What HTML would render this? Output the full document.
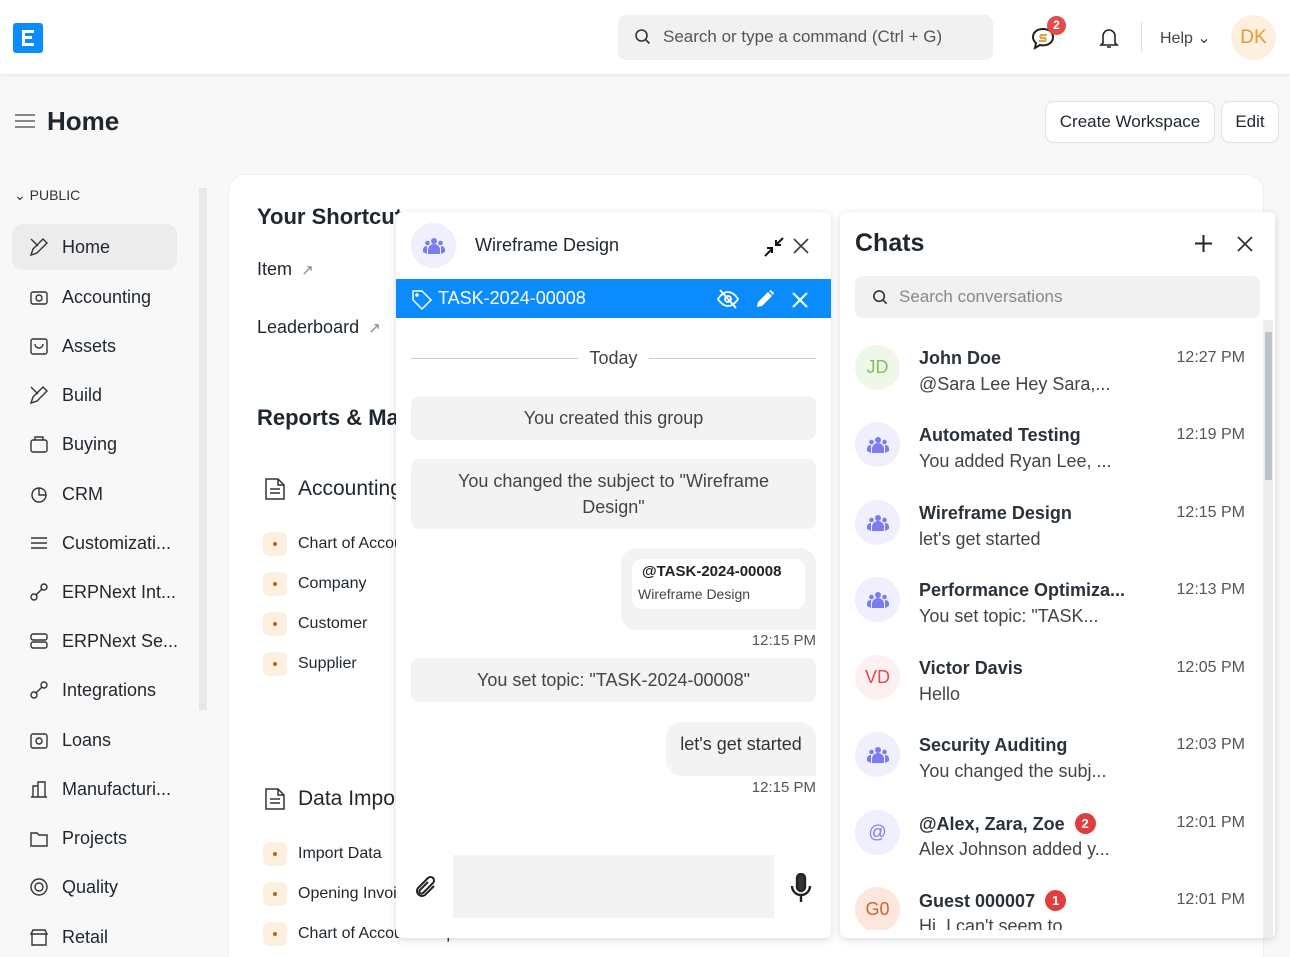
<!DOCTYPE html>
<html><head><meta charset="utf-8"><style>
*{box-sizing:border-box;margin:0;padding:0}
html,body{width:1290px;height:957px;overflow:hidden}
body{background:#f8f8f8;font-family:"Liberation Sans",sans-serif;color:#1f272e;position:relative}
.a{position:absolute}
.nav{left:0;top:0;width:1290px;height:75px;background:#fff;border-bottom:1px solid #ececec;box-shadow:0 1px 3px rgba(0,0,0,.04)}
.si{left:12px;width:175px;height:46px;display:flex;align-items:center;padding-left:16px;font-size:18px;color:#1f272e;white-space:nowrap}
.si svg{width:22px;height:22px;margin-right:12px;fill:none;stroke:#333;stroke-width:1.4;flex:none}
.dot{width:24px;height:24px;border-radius:6px;background:#fdf0de;display:flex;align-items:center;justify-content:center}
.dot:after{content:"";width:4px;height:4px;border-radius:50%;background:#b5651d}
.li{left:263px;display:flex;align-items:center;font-size:16px;color:#1f272e;white-space:nowrap}
.li .dot{margin-right:11px}
.sys{left:411px;width:405px;background:#f3f3f3;border-radius:8px;text-align:center;font-size:18px;color:#444;display:flex;align-items:center;justify-content:center}
.av{width:45px;height:45px;border-radius:50%;display:flex;align-items:center;justify-content:center;font-size:18px}
.ci{left:855px;width:390px;height:60px}
.ci .av{position:absolute;left:0;top:0}
.ci .n{position:absolute;left:64px;top:3px;font-size:18px;font-weight:bold;color:#2a323a;white-space:nowrap}
.ci .p{position:absolute;left:64px;top:29px;font-size:18px;color:#444;white-space:nowrap}
.ci .t{position:absolute;right:0;top:4px;font-size:16px;color:#555}
.bd{display:inline-block;width:21px;height:21px;border-radius:50%;background:#e03e3e;color:#fff;font-size:13px;text-align:center;line-height:21px;margin-left:10px;vertical-align:2px}
</style></head><body>
<div class="a nav"></div>
<div class="a" style="left:13px;top:23px;width:30px;height:30px;background:#0a8cff;border-radius:3px"></div>
<div class="a" style="left:22px;top:30px;width:12px;height:16px;border:3px solid #fff;border-right:none"></div>
<div class="a" style="left:22px;top:36px;width:10px;height:3px;background:#fff"></div>
<div class="a" style="left:618px;top:15px;width:375px;height:45px;background:#f1f1f1;border-radius:8px"></div>
<svg class="a" style="left:634px;top:28px" width="18" height="18" viewBox="0 0 18 18" fill="none" stroke="#333" stroke-width="1.6"><circle cx="7.5" cy="7.5" r="5.5"/><path d="M11.5 11.5l4 4"/></svg>
<div class="a" style="left:663px;top:27px;font-size:17px;color:#555">Search or type a command (Ctrl + G)</div>
<svg class="a" style="left:1031px;top:27px" width="26" height="24" viewBox="0 0 26 24" fill="none" stroke="#222" stroke-width="2"><path d="M12 2C6 2 2 5.5 2 10c0 2.5 1.2 4.5 3 6l-1 5 5-3c1 .3 2 .4 3 .4 6 0 10-3.5 10-8.4S18 2 12 2z"/><path d="M16 8h-6a2 2 0 000 3h4a2 2 0 010 3H8" stroke="#e8a03a"/></svg>
<div class="a" style="left:1047px;top:16px;width:19px;height:19px;border-radius:50%;background:#e24c4c;color:#fff;font-size:12px;font-weight:bold;text-align:center;line-height:19px">2</div>
<svg class="a" style="left:1099px;top:27px" width="20" height="22" viewBox="0 0 20 22" fill="none" stroke="#222" stroke-width="1.6"><path d="M4 16V9a6 6 0 0112 0v7l2 2H2l2-2zM8 20h4"/></svg>
<div class="a" style="left:1141px;top:22px;width:1px;height:30px;background:#ddd"></div>
<div class="a" style="left:1160px;top:28px;font-size:16px;color:#444">Help ⌄</div>
<div class="a av" style="left:1231px;top:15px;background:#fdf0de;color:#e59a2e;font-size:19px">DK</div>

<div class="a" style="left:15px;top:114px;width:20px;height:2px;background:#888;box-shadow:0 6px 0 #888,0 12px 0 #888"></div>
<div class="a" style="left:47px;top:106px;font-size:26px;font-weight:bold">Home</div>
<div class="a" style="left:1046px;top:102px;width:168px;height:40px;background:#fff;border-radius:8px;box-shadow:0 0 0 1px #e2e2e2,0 1px 2px rgba(0,0,0,.06);font-size:17px;text-align:center;line-height:40px">Create Workspace</div>
<div class="a" style="left:1222px;top:102px;width:56px;height:40px;background:#fff;border-radius:8px;box-shadow:0 0 0 1px #e2e2e2,0 1px 2px rgba(0,0,0,.06);font-size:17px;text-align:center;line-height:40px">Edit</div>

<div class="a" style="left:14px;top:187px;font-size:14px;color:#333">⌄ PUBLIC</div>
<div class="a" style="left:12px;top:224px;width:165px;height:46px;background:#ececed;border-radius:10px"></div>
<div class="a" style="left:199px;top:188px;width:8px;height:522px;background:#e8e8e8"></div>
<div class="a si" style="top:224px"><svg viewBox="0 0 22 22"><path d="M3 3l7 7M5 13l-2 6 6-2 10-10-4-4z"/></svg>Home</div>
<div class="a si" style="top:274px"><svg viewBox="0 0 22 22"><rect x="3" y="6" width="16" height="12" rx="2"/><circle cx="11" cy="12" r="3"/></svg>Accounting</div>
<div class="a si" style="top:323px"><svg viewBox="0 0 22 22"><rect x="3" y="4" width="16" height="15" rx="2"/><path d="M7 9a4 4 0 008 0"/></svg>Assets</div>
<div class="a si" style="top:372px"><svg viewBox="0 0 22 22"><path d="M3 3l7 7M5 13l-2 6 6-2 10-10-4-4z"/></svg>Build</div>
<div class="a si" style="top:421px"><svg viewBox="0 0 22 22"><rect x="3" y="7" width="16" height="12" rx="2"/><path d="M7 7V4h8v3"/></svg>Buying</div>
<div class="a si" style="top:471px"><svg viewBox="0 0 22 22"><circle cx="11" cy="12" r="7"/><path d="M11 5v7h7"/></svg>CRM</div>
<div class="a si" style="top:520px"><svg viewBox="0 0 22 22"><path d="M3 6h16M3 11h16M3 16h16"/></svg>Customizati...</div>
<div class="a si" style="top:569px"><svg viewBox="0 0 22 22"><circle cx="6" cy="16" r="3"/><circle cx="16" cy="6" r="3"/><path d="M8 14l6-6"/></svg>ERPNext Int...</div>
<div class="a si" style="top:618px"><svg viewBox="0 0 22 22"><rect x="3" y="4" width="16" height="6" rx="2"/><rect x="3" y="12" width="16" height="6" rx="2"/></svg>ERPNext Se...</div>
<div class="a si" style="top:667px"><svg viewBox="0 0 22 22"><circle cx="6" cy="16" r="3"/><circle cx="16" cy="6" r="3"/><path d="M8 14l6-6"/></svg>Integrations</div>
<div class="a si" style="top:717px"><svg viewBox="0 0 22 22"><rect x="3" y="5" width="16" height="14" rx="2"/><circle cx="11" cy="12" r="3"/></svg>Loans</div>
<div class="a si" style="top:766px"><svg viewBox="0 0 22 22"><path d="M3 19h16M5 19V8h5v11M10 19V4h7v15"/></svg>Manufacturi...</div>
<div class="a si" style="top:815px"><svg viewBox="0 0 22 22"><path d="M3 6h6l2 2h8v11H3z"/></svg>Projects</div>
<div class="a si" style="top:864px"><svg viewBox="0 0 22 22"><circle cx="11" cy="11" r="8"/><circle cx="11" cy="11" r="4"/></svg>Quality</div>
<div class="a si" style="top:914px"><svg viewBox="0 0 22 22"><path d="M3 8l2-4h12l2 4zM4 8v11h14V8"/></svg>Retail</div>

<div class="a" style="left:229px;top:175px;width:1034px;height:800px;background:#fff;border-radius:16px;box-shadow:0 0 0 1px #efefef"></div>
<div class="a" style="left:257px;top:204px;font-size:22px;font-weight:bold">Your Shortcuts</div>
<div class="a" style="left:257px;top:259px;font-size:18px">Item <span style="color:#888;font-size:15px">&nbsp;↗</span></div>
<div class="a" style="left:257px;top:317px;font-size:18px">Leaderboard <span style="color:#888;font-size:15px">&nbsp;↗</span></div>
<div class="a" style="left:257px;top:405px;font-size:22px;font-weight:bold">Reports &amp; Masters</div>
<svg class="a" style="left:263px;top:476px" width="24" height="26" viewBox="0 0 24 26" fill="none" stroke="#333" stroke-width="1.5"><path d="M3 3h12l6 6v14H3z M15 3v6h6M7 13h10M7 17h10"/></svg>
<div class="a" style="left:298px;top:477px;font-size:21px">Accounting</div>
<div class="a li" style="top:532px"><div class="dot"></div>Chart of Accounts</div>
<div class="a li" style="top:572px"><div class="dot"></div>Company</div>
<div class="a li" style="top:612px"><div class="dot"></div>Customer</div>
<div class="a li" style="top:652px"><div class="dot"></div>Supplier</div>
<svg class="a" style="left:263px;top:786px" width="24" height="26" viewBox="0 0 24 26" fill="none" stroke="#333" stroke-width="1.5"><path d="M3 3h12l6 6v14H3z M15 3v6h6M7 13h10M7 17h10"/></svg>
<div class="a" style="left:298px;top:787px;font-size:21px">Data Import</div>
<div class="a li" style="top:842px"><div class="dot"></div>Import Data</div>
<div class="a li" style="top:882px"><div class="dot"></div>Opening Invoice</div>
<div class="a li" style="top:922px"><div class="dot"></div>Chart of Accounts Importer</div>

<!-- chat window -->
<div class="a" style="left:396px;top:212px;width:435px;height:726px;background:#fff;border-radius:6px;box-shadow:0 2px 8px rgba(0,0,0,.15);overflow:hidden">
<div class="a av" style="left:15px;top:11px;background:#efeffd"><svg width="22" height="18" viewBox="0 0 22 18" fill="#7c7cf0"><circle cx="11" cy="4" r="3"/><circle cx="4.5" cy="6" r="2.3"/><circle cx="17.5" cy="6" r="2.3"/><path d="M5 17v-4a6 6 0 0112 0v4zM0 15v-3a4 4 0 014-3v8zM22 15v-3a4 4 0 00-4-3v8z"/></svg></div>
<div class="a" style="left:79px;top:23px;font-size:18px;color:#1f272e">Wireframe Design</div>
<svg class="a" style="left:367px;top:24px" width="22" height="22" viewBox="0 0 22 22" stroke="#111" stroke-width="2" fill="none"><path d="M2 20l7-7M4 12h5v5M20 2l-7 7M13 4v5h5"/></svg>
<svg class="a" style="left:396px;top:25px" width="18" height="18" viewBox="0 0 18 18" stroke="#444" stroke-width="1.8"><path d="M2 2l14 14M16 2L2 16"/></svg>
<div class="a" style="left:0;top:67px;width:435px;height:39px;background:#0a8cff"></div>
<svg class="a" style="left:15px;top:77px" width="22" height="22" viewBox="0 0 22 22" fill="none" stroke="#fff" stroke-width="1.5"><path d="M2 2h9l9 9-9 9-9-9z"/><circle cx="6" cy="6" r="1"/></svg>
<div class="a" style="left:42px;top:76px;font-size:18px;color:#fff">TASK-2024-00008</div>
<svg class="a" style="left:320px;top:76px" width="24" height="22" viewBox="0 0 24 22" fill="none" stroke="#fff" stroke-width="1.8"><path d="M2 11s4-7 10-7 10 7 10 7-4 7-10 7S2 11 2 11z"/><circle cx="12" cy="11" r="3"/><path d="M4 2l16 18"/></svg>
<svg class="a" style="left:359px;top:77px" width="20" height="20" viewBox="0 0 20 20" fill="#fff"><path d="M2 18l1-5L13 3l4 4L7 17zM14 2l2-1 3 3-1 2z"/></svg>
<svg class="a" style="left:396px;top:80px" width="16" height="16" viewBox="0 0 16 16" stroke="#fff" stroke-width="2"><path d="M1 1l14 14M15 1L1 15"/></svg>
<div class="a" style="left:15px;top:146px;width:167px;height:1px;background:#ccc"></div>
<div class="a" style="left:253px;top:146px;width:167px;height:1px;background:#ccc"></div>
<div class="a" style="left:182px;top:136px;width:71px;text-align:center;font-size:18px;color:#444">Today</div>
</div>
<div class="a sys" style="top:396px;height:44px">You created this group</div>
<div class="a sys" style="top:459px;height:70px;line-height:26px;padding:0 30px">You changed the subject to "Wireframe Design"</div>
<div class="a" style="left:621px;top:548px;width:195px;height:82px;background:#f3f3f3;border-radius:16px 16px 0 16px"></div>
<div class="a" style="left:632px;top:559px;width:173px;height:50px;background:#fff;border-radius:10px"></div>
<div class="a" style="left:642px;top:563px;font-size:15px;font-weight:bold;color:#222">@TASK-2024-00008</div>
<div class="a" style="left:638px;top:586px;font-size:14px;color:#444">Wireframe Design</div>
<div class="a" style="left:700px;top:632px;width:116px;text-align:right;font-size:15px;color:#555">12:15 PM</div>
<div class="a sys" style="top:658px;height:44px">You set topic: "TASK-2024-00008"</div>
<div class="a" style="left:666px;top:722px;width:150px;height:54px;background:#f3f3f3;border-radius:16px 16px 0 16px;font-size:18px;color:#333;line-height:44px;text-align:center">let's get started</div>
<div class="a" style="left:700px;top:779px;width:116px;text-align:right;font-size:15px;color:#555">12:15 PM</div>
<svg class="a" style="left:412px;top:874px" width="28" height="28" viewBox="0 0 28 28" fill="none" stroke="#222" stroke-width="2"><path d="M22 12l-9 9a5 5 0 01-7-7l10-10a3.5 3.5 0 015 5l-10 10a2 2 0 01-3-3l8-8"/></svg>
<div class="a" style="left:453px;top:855px;width:321px;height:63px;background:#f3f3f3"></div>
<svg class="a" style="left:788px;top:873px" width="26" height="30" viewBox="0 0 26 30" fill="none" stroke="#222" stroke-width="2.4"><rect x="9" y="1" width="8" height="17" rx="4" fill="#333"/><path d="M4 13a9 9 0 0018 0M13 22v7"/></svg>

<!-- chats panel -->
<div class="a" style="left:840px;top:212px;width:435px;height:726px;background:#fff;border-radius:6px;box-shadow:0 2px 8px rgba(0,0,0,.15);overflow:hidden">
<div class="a" style="left:15px;top:17px;font-size:25px;font-weight:bold;color:#1f272e">Chats</div>
<svg class="a" style="left:354px;top:22px" width="19" height="19" viewBox="0 0 19 19" stroke="#222" stroke-width="2"><path d="M9.5 1v17M1 9.5h17"/></svg>
<svg class="a" style="left:397px;top:24px" width="16" height="16" viewBox="0 0 16 16" stroke="#333" stroke-width="1.8"><path d="M1 1l14 14M15 1L1 15"/></svg>
<div class="a" style="left:15px;top:64px;width:405px;height:42px;background:#f1f1f1;border-radius:8px"></div>
<svg class="a" style="left:32px;top:77px" width="17" height="17" viewBox="0 0 18 18" fill="none" stroke="#333" stroke-width="1.7"><circle cx="7.5" cy="7.5" r="5.5"/><path d="M11.5 11.5l4 4"/></svg>
<div class="a" style="left:59px;top:75px;font-size:17px;color:#888">Search conversations</div>
<div class="a" style="left:423px;top:108px;width:10px;height:618px;background:#ececec"></div>
<div class="a" style="left:425px;top:120px;width:7px;height:148px;background:#bcc2c8"></div>
</div>
<div class="a ci" style="top:345px"><div class="av" style="background:#eef7e8;color:#7fc05a">JD</div><div class="n">John Doe</div><div class="p">@Sara Lee Hey Sara,...</div><div class="t">12:27 PM</div></div>
<div class="a ci" style="top:422px"><div class="av" style="background:#efeffd"><svg width="22" height="18" viewBox="0 0 22 18" fill="#7c7cf0"><circle cx="11" cy="4" r="3"/><circle cx="4.5" cy="6" r="2.3"/><circle cx="17.5" cy="6" r="2.3"/><path d="M5 17v-4a6 6 0 0112 0v4zM0 15v-3a4 4 0 014-3v8zM22 15v-3a4 4 0 00-4-3v8z"/></svg></div><div class="n">Automated Testing</div><div class="p">You added Ryan Lee, ...</div><div class="t">12:19 PM</div></div>
<div class="a ci" style="top:500px"><div class="av" style="background:#efeffd"><svg width="22" height="18" viewBox="0 0 22 18" fill="#7c7cf0"><circle cx="11" cy="4" r="3"/><circle cx="4.5" cy="6" r="2.3"/><circle cx="17.5" cy="6" r="2.3"/><path d="M5 17v-4a6 6 0 0112 0v4zM0 15v-3a4 4 0 014-3v8zM22 15v-3a4 4 0 00-4-3v8z"/></svg></div><div class="n">Wireframe Design</div><div class="p">let's get started</div><div class="t">12:15 PM</div></div>
<div class="a ci" style="top:577px"><div class="av" style="background:#efeffd"><svg width="22" height="18" viewBox="0 0 22 18" fill="#7c7cf0"><circle cx="11" cy="4" r="3"/><circle cx="4.5" cy="6" r="2.3"/><circle cx="17.5" cy="6" r="2.3"/><path d="M5 17v-4a6 6 0 0112 0v4zM0 15v-3a4 4 0 014-3v8zM22 15v-3a4 4 0 00-4-3v8z"/></svg></div><div class="n">Performance Optimiza...</div><div class="p">You set topic: "TASK...</div><div class="t">12:13 PM</div></div>
<div class="a ci" style="top:655px"><div class="av" style="background:#fdf0f0;color:#e24c4c">VD</div><div class="n">Victor Davis</div><div class="p">Hello</div><div class="t">12:05 PM</div></div>
<div class="a ci" style="top:732px"><div class="av" style="background:#efeffd"><svg width="22" height="18" viewBox="0 0 22 18" fill="#7c7cf0"><circle cx="11" cy="4" r="3"/><circle cx="4.5" cy="6" r="2.3"/><circle cx="17.5" cy="6" r="2.3"/><path d="M5 17v-4a6 6 0 0112 0v4zM0 15v-3a4 4 0 014-3v8zM22 15v-3a4 4 0 00-4-3v8z"/></svg></div><div class="n">Security Auditing</div><div class="p">You changed the subj...</div><div class="t">12:03 PM</div></div>
<div class="a ci" style="top:810px"><div class="av" style="background:#efeffd;color:#7c7cf0">@</div><div class="n">@Alex, Zara, Zoe<span class="bd">2</span></div><div class="p">Alex Johnson added y...</div><div class="t">12:01 PM</div></div>
<div class="a" style="left:855px;top:870px;width:405px;height:60px;overflow:hidden">
<div class="a ci" style="left:0;top:17px"><div class="av" style="background:#fde6dc;color:#d4622a">G0</div><div class="n">Guest 000007<span class="bd">1</span></div><div class="p">Hi, I can't seem to ...</div><div class="t">12:01 PM</div></div>
</div>
</body></html>
